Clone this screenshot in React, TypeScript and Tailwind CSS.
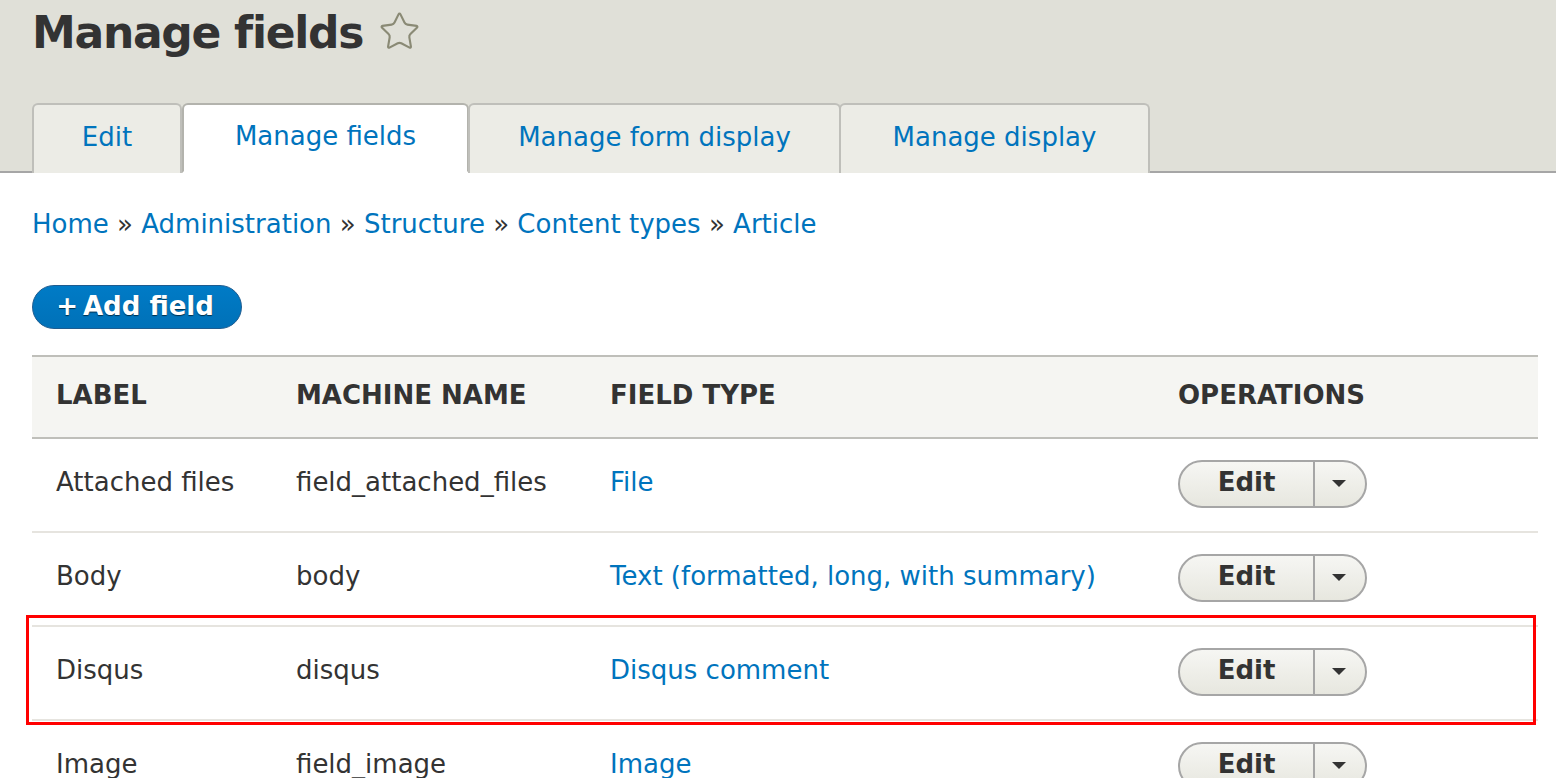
import { Star } from "lucide-react";

type Field = {
    label: string;
    machine: string;
    type: string;
};

const fields: Field[] = [
    { label: "Attached files", machine: "field_attached_files", type: "File" },
    { label: "Body", machine: "body", type: "Text (formatted, long, with summary)" },
    { label: "Disqus", machine: "disqus", type: "Disqus comment" },
    { label: "Image", machine: "field_image", type: "Image" },
];

const tabs = [
    { name: "Edit", cls: "w-[150px]", active: false },
    { name: "Manage fields", cls: "w-[287px]", active: true },
    { name: "Manage form display", cls: "w-[373px] -ml-[1px]", active: false },
    { name: "Manage display", cls: "w-[311px] -ml-[2px]", active: false },
];

const DropButton = () => (
    <div className="flex h-[48px] w-[189px] rounded-full border-2 border-[#a6a6a6] bg-gradient-to-b from-[#f6f6f3] to-[#e7e7df] overflow-hidden">
        <div className="flex w-[135px] items-center justify-center border-r-2 border-[#a6a6a6] text-[26px] font-bold text-[#333] pb-[2px]">
            Edit
        </div>
        <div className="flex flex-1 items-center justify-center pr-[2px]">
            <div className="h-0 w-0 border-x-[7px] border-t-[7px] border-x-transparent border-t-[#333]" />
        </div>
    </div>
);

export default function App() {
    return (
        <div className="relative min-h-[778px] bg-white text-[#333] font-['DejaVu_Sans',sans-serif]">
            {/* page header */}
            <div className="bg-[#e0e0d8] border-b-2 border-[#a6a6a6] px-[32px] pt-[6px]">
                <div className="flex items-center gap-[15px] h-[54px]">
                    <h1 className="text-[44px] leading-[54px] font-bold tracking-[-1.3px] text-[#333]">Manage fields</h1>
                    <Star className="w-[43px] h-[43px] text-[#8a8a75] -mt-[3px]" strokeWidth={1.2} />
                </div>
                <div className="flex mt-[43px] -mb-[2px]">
                    {tabs.map((tab) => (
                        <div
                            key={tab.name}
                            className={`${tab.cls} h-[70px] flex items-center justify-center rounded-t-[6px] border-2 text-[26px] text-[#0074bd] ${
                                tab.active ? "bg-white border-[#b3b3ad] border-b-white" : "bg-[#ecece6] border-[#bfbfba] border-b-0"
                            }`}
                        >
                            <span className="pb-[4px]">{tab.name}</span>
                        </div>
                    ))}
                </div>
            </div>

            <div className="px-[32px]">
                {/* breadcrumb */}
                <div className="pt-[34px] text-[26px] leading-[34px] text-[#0074bd]">
                    Home <span className="text-[#333]">»</span> Administration <span className="text-[#333]">»</span> Structure{" "}
                    <span className="text-[#333]">»</span> Content types <span className="text-[#333]">»</span> Article
                </div>

                {/* add field */}
                <div className="mt-[44px]">
                    <button className="h-[44px] w-[210px] rounded-full border border-[#1e5c90] bg-gradient-to-b from-[#007bc6] to-[#0071b8] text-[26px] font-bold text-white [text-shadow:0_1px_1px_rgba(0,0,0,0.6)] flex items-center justify-center pb-[2px] pr-[4px]">
                        <span className="mr-[5px]">+</span>Add field
                    </button>
                </div>

                {/* table */}
                <table className="mt-[26px] w-[1506px] border-collapse table-fixed">
                    <colgroup>
                        <col className="w-[240px]" />
                        <col className="w-[314px]" />
                        <col className="w-[568px]" />
                        <col />
                    </colgroup>
                    <thead>
                        <tr className="h-[82px] bg-[#f5f5f2] border-y-2 border-[#bfbfba] text-left text-[26px] font-bold uppercase">
                            <th className="pl-[24px] pb-[4px] font-bold">Label</th>
                            <th className="pl-[24px] pb-[4px] font-bold">Machine name</th>
                            <th className="pl-[24px] pb-[4px] font-bold">Field type</th>
                            <th className="pl-[24px] pb-[4px] font-bold">Operations</th>
                        </tr>
                    </thead>
                    <tbody>
                        {fields.map((f) => (
                            <tr key={f.machine} className="h-[94px] border-b-2 border-[#e6e4df] text-[26px]">
                                <td className="pl-[24px] pb-[5px]">{f.label}</td>
                                <td className="pl-[24px] pb-[5px]">{f.machine}</td>
                                <td className="pl-[24px] pb-[5px] text-[#0074bd]">{f.type}</td>
                                <td className="pl-[24px] pb-[3px]">
                                    <DropButton />
                                </td>
                            </tr>
                        ))}
                    </tbody>
                </table>
            </div>

            {/* highlight box */}
            <div className="absolute left-[26px] top-[615px] w-[1510px] h-[110px] border-[3px] border-[#ff0000] pointer-events-none" />
        </div>
    );
}
